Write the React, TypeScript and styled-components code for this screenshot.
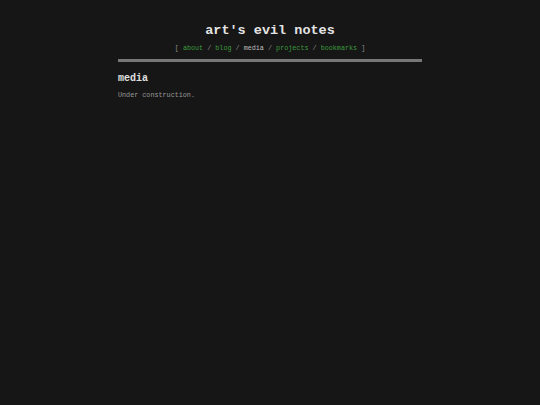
import { FC } from 'react';
import styled, { createGlobalStyle } from 'styled-components';

const GlobalStyle = createGlobalStyle`
    html, body {
        margin: 0;
        padding: 0;
        background: #161616;
    }
    body {
        font-family: "Liberation Mono", "Courier New", monospace;
        color: #cfcfcf;
        -webkit-font-smoothing: antialiased;
    }
`;

const Page = styled.div`
    width: 304px;
    margin: 0 auto;
    padding-top: 22px;
`;

const Header = styled.header`
    text-align: center;
    border-bottom: 3px solid #777;
    padding-bottom: 6px;
`;

const Title = styled.h1`
    margin: 0;
    font-size: 13.5px;
    line-height: 18px;
    font-weight: bold;
    color: #e4e4e4;
`;

const Nav = styled.nav`
    margin-top: 4px;
    font-size: 6.75px;
    line-height: 9px;
    color: #8a8a8a;
`;

const NavLink = styled.a<{ $current?: boolean }>`
    color: ${(p) => (p.$current ? '#bdbdbd' : '#3c9a3c')};
    text-decoration: none;
`;

const Heading = styled.h2`
    margin: 10px 0 0;
    font-size: 10px;
    line-height: 14px;
    font-weight: bold;
    color: #e0e0e0;
`;

const Text = styled.p`
    margin: 5px 0 0;
    font-size: 6.75px;
    line-height: 9px;
    color: #9a9a9a;
`;

const links = ['about', 'blog', 'media', 'projects', 'bookmarks'];

const App: FC = () => {
    return (
        <>
            <GlobalStyle />
            <Page>
                <Header>
                    <Title>art's evil notes</Title>
                    <Nav>
                        [{' '}
                        {links.map((l, i) => (
                            <span key={l}>
                                {i > 0 && ' / '}
                                {l === 'media' ? <NavLink as="span" $current>{l}</NavLink> : <NavLink href="#">{l}</NavLink>}
                            </span>
                        ))}{' '}
                        ]
                    </Nav>
                </Header>
                <Heading>media</Heading>
                <Text>Under construction.</Text>
            </Page>
        </>
    );
};

export default App;
